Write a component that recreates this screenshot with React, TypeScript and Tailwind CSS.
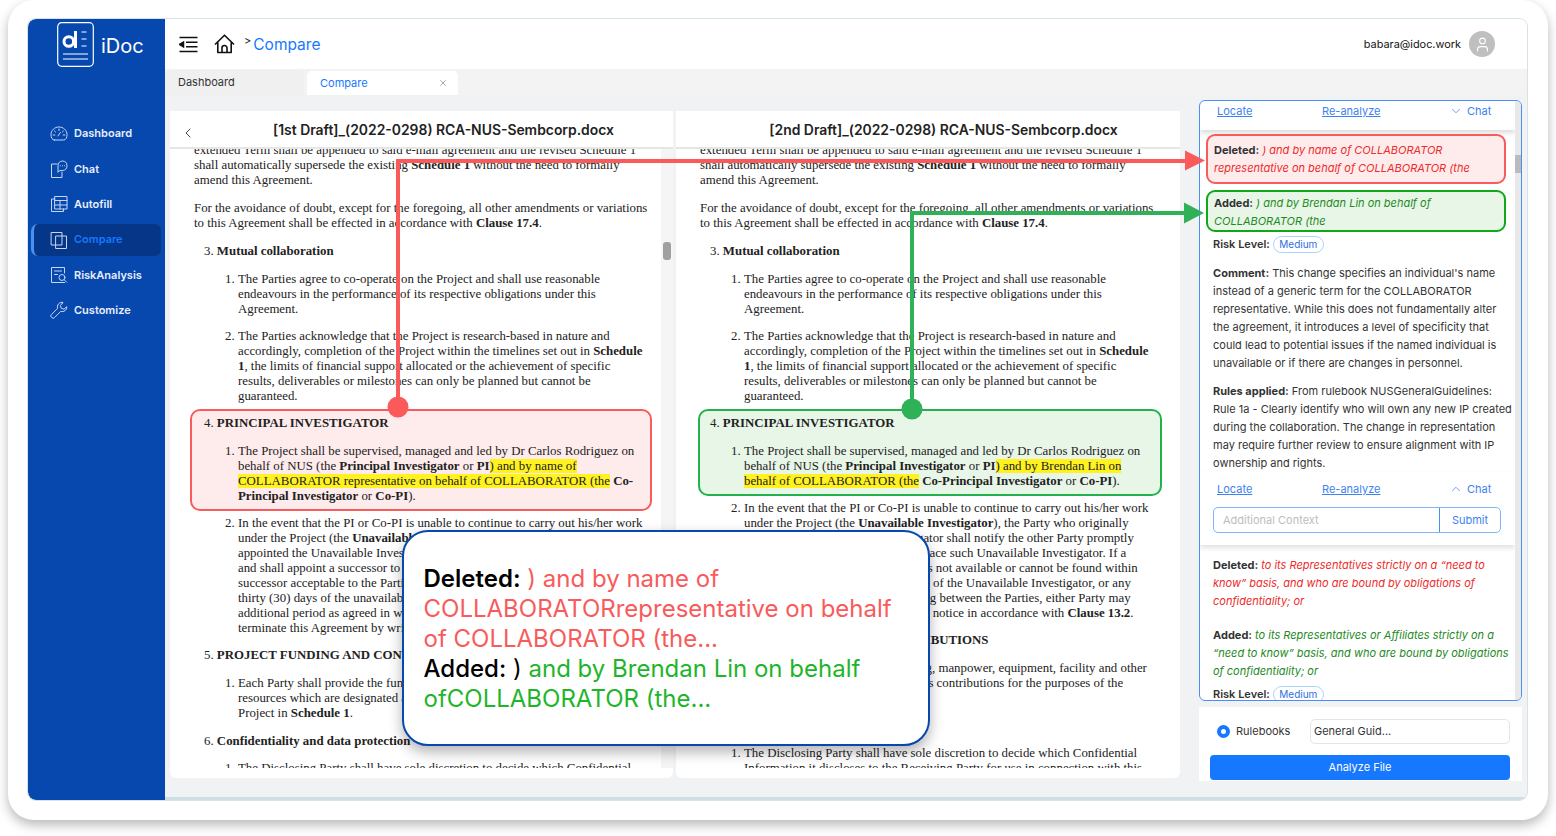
import React from "react";
import { ChevronDown, ChevronUp, ChevronLeft, X, User } from "lucide-react";

function L({ children, className = "" }: { children: React.ReactNode; className?: string }) {
    return <div className={`h-[15px] leading-[15px] whitespace-nowrap ${className}`}>{children}</div>;
}

function Item({ n, children, className = "" }: { n: string; children: React.ReactNode; className?: string }) {
    return (
        <div className={`relative pl-[44px] ${className}`}>
            <span className="absolute left-[31px] top-0 leading-[15px]">{n}</span>
            {children}
        </div>
    );
}

function Head({ n, children, className = "" }: { n: string; children: React.ReactNode; className?: string }) {
    return (
        <L className={`pl-[10px] ${className}`}>
            {n} <b>{children}</b>
        </L>
    );
}

function DocBody({ added }: { added: boolean }) {
    return (
        <div className="relative flex-1 overflow-hidden pl-[24px] font-['Liberation_Serif',serif] text-[12.85px] text-[#222]">
            <div className="-mt-[6px]">
                <L>extended Term shall be appended to said e-mail agreement and the revised Schedule 1</L>
                <L>shall automatically supersede the existing <b>Schedule 1</b> without the need to formally</L>
                <L>amend this Agreement.</L>
                <L className="mt-[13px]">For the avoidance of doubt, except for the foregoing, all other amendments or variations</L>
                <L>to this Agreement shall be effected in accordance with <b>Clause 17.4</b>.</L>
                <Head n="3." className="mt-[13px]">Mutual collaboration</Head>
                <Item n="1." className="mt-[13px]">
                    <L>The Parties agree to co-operate on the Project and shall use reasonable</L>
                    <L>endeavours in the performance of its respective obligations under this</L>
                    <L>Agreement.</L>
                </Item>
                <Item n="2." className="mt-[12px]">
                    <L>The Parties acknowledge that the Project is research-based in nature and</L>
                    <L>accordingly, completion of the Project within the timelines set out in <b>Schedule</b></L>
                    <L><b>1</b>, the limits of financial support allocated or the achievement of specific</L>
                    <L>results, deliverables or milestones can only be planned but cannot be</L>
                    <L>guaranteed.</L>
                </Item>
                {added ? (
                    <div className="relative mt-[5px] -ml-[2px] w-[464px] rounded-[10px] border-2 border-[#22b14c] bg-[#e8f6e8] pb-[5px] pt-[5px]">
                        <Head n="4.">PRINCIPAL INVESTIGATOR</Head>
                        <Item n="1." className="mt-[13px]">
                            <L>The Project shall be supervised, managed and led by Dr Carlos Rodriguez on</L>
                            <L>behalf of NUS (the <b>Principal Investigator</b> or <b>PI</b><span className="bg-[#fff21f]">) and by Brendan Lin on</span></L>
                            <L><span className="bg-[#fff21f]">behalf of COLLABORATOR (the</span> <b>Co-Principal Investigator</b> or <b>Co-PI</b>).</L>
                        </Item>
                    </div>
                ) : (
                    <div className="relative mt-[5px] -ml-[4px] w-[462px] rounded-[10px] border-2 border-[#f85b5b] bg-[#feecec] pb-[5px] pl-[2px] pt-[5px]">
                        <Head n="4.">PRINCIPAL INVESTIGATOR</Head>
                        <Item n="1." className="mt-[13px]">
                            <L>The Project shall be supervised, managed and led by Dr Carlos Rodriguez on</L>
                            <L>behalf of NUS (the <b>Principal Investigator</b> or <b>PI</b><span className="bg-[#fff21f]">) and by name of</span></L>
                            <L><span className="bg-[#fff21f]">COLLABORATOR representative on behalf of COLLABORATOR (the</span> <b>Co-</b></L>
                            <L><b>Principal Investigator</b> or <b>Co-PI</b>).</L>
                        </Item>
                    </div>
                )}
                <Item n="2." className="mt-[5px]">
                    <L>In the event that the PI or Co-PI is unable to continue to carry out his/her work</L>
                    <L>under the Project (the <b>Unavailable Investigator</b>), the Party who originally</L>
                    <L>appointed the Unavailable Investigator shall notify the other Party promptly</L>
                    <L>and shall appoint a successor to replace such Unavailable Investigator. If a</L>
                    <L>successor acceptable to the Parties is not available or cannot be found within</L>
                    <L>thirty (30) days of the unavailability of the Unavailable Investigator, or any</L>
                    <L>additional period as agreed in writing between the Parties, either Party may</L>
                    <L>terminate this Agreement by written notice in accordance with <b>Clause 13.2</b>.</L>
                </Item>
                <Head n="5." className="mt-[12px]">PROJECT FUNDING AND CONTRIBUTIONS</Head>
                <Item n="1." className="mt-[13px]">
                    <L>Each Party shall provide the funding, manpower, equipment, facility and other</L>
                    <L>resources which are designated as its contributions for the purposes of the</L>
                    <L>Project in <b>Schedule 1</b>.</L>
                </Item>
                <Head n="6." className="mt-[13px]">Confidentiality and data protection</Head>
                <Item n="1." className="mt-[12px]">
                    <L>The Disclosing Party shall have sole discretion to decide which Confidential</L>
                    <L>Information it discloses to the Receiving Party for use in connection with this</L>
                </Item>
            </div>
        </div>
    );
}

function NavIcon({ name }: { name: string }) {
    const p = {
        width: 18,
        height: 18,
        viewBox: "0 0 18 18",
        fill: "none",
        stroke: "#c6d6f3",
        strokeWidth: 1,
        strokeLinecap: "round" as const,
        strokeLinejoin: "round" as const,
    };
    if (name === "Dashboard")
        return (
            <svg {...p}>
                <path d="M4.5 15h9a3 3 0 0 0 2.6-1.5A7 7 0 0 0 17 9.5C17 5.4 13.4 2 9 2S1 5.4 1 9.5c0 1.4.3 2.9.9 4A3 3 0 0 0 4.5 15Z" />
                <path d="M9 4v1.5M4.6 6l1 1M13.4 6l-1 1M3.2 10h1.600M13.200 10h1.600M8 11l2.400-3.600" />
            </svg>
        );
    if (name === "Chat")
        return (
            <svg {...p}>
                <path d="M7 4H1.500v13.500H12V12" />
                <path d="M8 11.500V6a5 5 0 0 1 4.500-5A4.800 4.800 0 0 1 17 5.800 4.800 4.800 0 0 1 12.500 10.500H10L8 12Z" />
                <path d="M10.500 5.800h.1M12.500 5.800h.1M14.500 5.800h.1" />
            </svg>
        );
    if (name === "Autofill")
        return (
            <svg {...p}>
                <path d="M5 4H1.500v12.500h12V14" />
                <path d="M5 1.500h12V14H5ZM5 5.500h12M5 10h12M10 5.500V14" />
            </svg>
        );
    if (name === "Compare")
        return (
            <svg {...p}>
                <path d="M1.500 1.500h10.500v12.500H1.500Z" />
                <path d="M6 5h10.500v12.500H6Z" />
            </svg>
        );
    if (name === "RiskAnalysis")
        return (
            <svg {...p}>
                <path d="M14.500 7V1.500h-13v15h13" />
                <path d="M4.500 5h7M4.500 8.500h3" />
                <circle cx="12" cy="11.500" r="3" />
                <path d="m14.200 13.800 2.500 2.500" />
            </svg>
        );
    return (
        <svg {...p}>
            <path d="M12.300 1.200a4.600 4.600 0 0 0-4.700 6.100L1.400 13.500a1.900 1.900 0 0 0 0 2.700l.4.400a1.900 1.900 0 0 0 2.700 0l6.200-6.200a4.600 4.600 0 0 0 6.100-4.700l-2.800 2.500-2.800-.9-.8-2.800 2.500-2.800c-.2 0-.4.500-.6.500Z" />
        </svg>
    );
}

const NAV = ["Dashboard", "Chat", "Autofill", "Compare", "RiskAnalysis", "Customize"];

function Sidebar() {
    return (
        <aside className="flex w-[137px] shrink-0 flex-col rounded-l-[8px] bg-[#0748ae]">
            <div className="flex h-[97px] items-start pl-[29px] pt-[3px]">
                <svg width="37" height="45" viewBox="0 0 37 45" fill="none" stroke="#fff">
                    <rect x="0.7" y="0.7" width="35.600" height="43.600" rx="4" strokeWidth="1.200" />
                    <path d="M6 32h25M6 37h25" strokeWidth="1.200" />
                    <path d="M24.500 10h5M24.500 17h5M24.500 24h5" strokeWidth="1.200" />
                    <circle cx="11.800" cy="19.500" r="4.800" strokeWidth="3" />
                    <path d="M18.500 9v17" strokeWidth="3" />
                </svg>
                <span className="ml-[7px] mt-[10.500px] font-['Inter',sans-serif] text-[20px] leading-[26px] text-white">iDoc</span>
            </div>
            <nav className="flex flex-col gap-[3.400px] pl-[3px] pt-[1.500px]">
                {NAV.map((n) => (
                    <div
                        key={n}
                        className={`flex h-[32px] w-[130px] items-center gap-[6px] rounded-[7px] pl-[19px] font-['Inter',sans-serif] text-[11px] font-semibold ${
                            n === "Compare" ? "border-l-[3px] border-[#4a90f0] bg-[#063688] !pl-[16px] text-[#1677ff]" : "text-[#e8effb]"
                        }`}
                    >
                        <NavIcon name={n} />
                        <span>{n}</span>
                    </div>
                ))}
            </nav>
        </aside>
    );
}

function TopBar() {
    return (
        <header className="flex h-[50px] shrink-0 items-center bg-white pl-[14px] pr-[32px] font-['Inter',sans-serif]">
            <svg width="19" height="17" viewBox="0 0 19 17" fill="none" stroke="#111" strokeWidth="1.500">
                <path d="M0.500 1.500h18M7 6.200h11.500M7 10.800h11.500M0.500 15.500h18" />
                <path d="M0.500 8.500 4.500 6v5Z" fill="#111" />
            </svg>
            <svg className="ml-[16px]" width="21" height="20" viewBox="0 0 21 20" fill="none" stroke="#111" strokeWidth="1.600" strokeLinejoin="round">
                <path d="M1 10.500 10.500 1.200 20 10.500M3.800 8.500V18.500h13.400V8.500" />
                <path d="M8 18.500v-4.500a2.500 2.500 0 0 1 5 0v4.500" />
            </svg>
            <span className="ml-[9px] -mt-[6px] text-[11px] text-[#222]">&gt;</span>
            <span className="ml-[2px] mt-[2px] text-[15.500px] text-[#1677ff]">Compare</span>
            <span className="ml-auto text-[10.900px] text-[#111]">babara@idoc.work</span>
            <div className="ml-[8px] flex h-[26px] w-[26px] items-center justify-center rounded-full bg-[#bfbfbf]">
                <User size={17} color="#fff" strokeWidth={1.500} />
            </div>
        </header>
    );
}

function Tabs() {
    return (
        <div className="flex h-[26px] shrink-0 items-end gap-[3px] bg-[#f3f3f4] font-['Inter',sans-serif] text-[11px]">
            <div className="flex h-[25px] w-[139px] items-center rounded-t-[5px] bg-[#f0f0f0] pl-[13px] text-[#333]">Dashboard</div>
            <div className="flex h-[24px] w-[151px] items-center justify-between rounded-t-[5px] bg-white pl-[13px] pr-[10px] text-[#1677ff]">
                Compare
                <X size={10} color="#999" />
            </div>
        </div>
    );
}

function DocPanel({ title, added, back }: { title: string; added: boolean; back?: boolean }) {
    return (
        <section className={`flex h-[667px] shrink-0 flex-col rounded-[6px] bg-white ${added ? "w-[504px]" : "w-[503px]"}`}>
            <div
                className={`relative z-10 flex h-[38px] shrink-0 items-center justify-center border-b-2 border-[#e6e6e6] bg-white pt-[2px] font-['Inter',sans-serif] text-[13.900px] font-semibold text-[#222] ${
                    added ? "pl-[31px]" : "pl-[44px]"
                }`}
            >
                {back && <ChevronLeft size={16} color="#444" strokeWidth={1.500} className="absolute left-[10px] top-[14px]" />}
                {title}
            </div>
            <div className="flex min-h-0 flex-1 pb-[10px]">
                <DocBody added={added} />
                {!added && (
                    <div className="w-[12px] shrink-0 bg-[#f5f5f5] pl-[2px] pt-[93px]">
                        <div className="h-[18px] w-[8px] rounded-[3px] bg-[#a0a0a0]" />
                    </div>
                )}
            </div>
        </section>
    );
}

function Actions({ up }: { up?: boolean }) {
    return (
        <div className="flex items-center pl-[17px] text-[11px] text-[#3d82f0]">
            <span className="w-[105px] underline">Locate</span>
            <span className="w-[127px] underline">Re-analyze</span>
            {up ? <ChevronUp size={14} strokeWidth={1.300} /> : <ChevronDown size={14} strokeWidth={1.300} />}
            <span className="ml-[4px]">Chat</span>
        </div>
    );
}

function RiskPill() {
    return (
        <span className="ml-[3px] inline-flex h-[17px] items-center rounded-full border border-[#a9d2fb] px-[5.500px] text-[10px] font-normal leading-none text-[#2f6fe0]">
            Medium
        </span>
    );
}

function ReviewPanel() {
    return (
        <div className="flex h-[601px] shrink-0 overflow-hidden rounded-[6px] border border-[#4a90f0] bg-white font-['Inter',sans-serif] text-[11px] leading-[18px] text-[#333]">
            <div className="min-w-0 flex-1">
                <div className="flex h-[29px] items-start pt-[1px] shadow-[0_3px_5px_rgba(0,0,0,0.14)]">
                    <Actions />
                </div>
                <div className="px-[6px] pt-[4px]">
                    <div className="h-[50px] w-[300px] rounded-[9px] border-2 border-[#f85b5b] bg-[#feecec] px-[6px] pt-[5px] italic text-[#ee2a2a]">
                        <b className="not-italic text-[#333]">Deleted:</b> ) and by name of COLLABORATOR representative on behalf of COLLABORATOR (the
                    </div>
                    <div className="mt-[6px] h-[42px] w-[300px] rounded-[9px] border-2 border-[#10a818] bg-[#e8f6e8] px-[6px] pt-[2px] italic text-[#1d8a1d]">
                        <b className="not-italic text-[#333]">Added:</b> ) and by Brendan Lin on behalf of COLLABORATOR (the
                    </div>
                    <div className="mt-[3px] flex items-center pl-[7px] font-semibold"><span>Risk Level:</span><RiskPill /></div>
                </div>
                <div className="pl-[13px] pr-[1px]">
                    <p className="mt-[11px] h-[108px]"><b>Comment:</b> This change specifies an individual's name<br />instead of a generic term for the COLLABORATOR<br />representative. While this does not fundamentally alter<br />the agreement, it introduces a level of specificity that<br />could lead to potential issues if the named individual is<br />unavailable or if there are changes in personnel.</p>
                    <p className="mt-[10px] h-[90px]"><b>Rules applied:</b> From rulebook NUSGeneralGuidelines:<br />Rule 1a - Clearly identify who will own any new IP created<br />during the collaboration. The change in representation<br />may require further review to ensure alignment with IP<br />ownership and rights.</p>
                </div>
                <div className="pb-[12px] pt-[8px] shadow-[0_3px_5px_rgba(0,0,0,0.12)]">
                    <Actions up />
                    <div className="ml-[13px] mt-[9px] flex h-[26px] w-[288px] rounded-[5px] border border-[#7fb4f5]">
                        <span className="flex flex-1 items-center pl-[9px] text-[#bdbdbd]">Additional Context</span>
                        <span className="flex w-[61px] items-center justify-center border-l border-[#4a90f0] text-[#3d82f0]">Submit</span>
                    </div>
                </div>
                <div className="pl-[13px] pr-[4px] pt-[11px]">
                    <p className="italic text-[#ee2a2a]"><b className="not-italic text-[#333]">Deleted:</b> to its Representatives strictly on a “need to know” basis, and who are bound by obligations of confidentiality; or</p>
                    <p className="mt-[16px] italic text-[#1d8a1d]"><b className="not-italic text-[#333]">Added:</b> to its Representatives or Affiliates strictly on a “need to know” basis, and who are bound by obligations of confidentiality; or</p>
                    <div className="mt-[5px] flex items-center font-semibold"><span>Risk Level:</span><RiskPill /></div>
                </div>
            </div>
            <div className="w-[6px] shrink-0 bg-[#e9e9e9] pt-[54px]">
                <div className="h-[18px] w-[6px] bg-[#bbb]" />
            </div>
        </div>
    );
}

function RulebookBar() {
    return (
        <div className="mt-[6px] h-[74px] bg-white pl-[11px] font-['Inter',sans-serif] text-[11px]">
            <div className="flex h-[48px] items-center pt-[1px]">
                <span className="ml-[7px] h-[13px] w-[13px] rounded-full border-[4px] border-[#1677ff] bg-white" />
                <span className="ml-[6px] w-[74px] text-[#333]">Rulebooks</span>
                <span className="flex h-[25px] w-[200px] items-center rounded-[5px] border border-[#e5e5e5] pl-[3px] text-[#333]">General Guid...</span>
            </div>
            <div className="flex h-[25px] w-[300px] items-center justify-center rounded-[4px] bg-[#1677ff] text-white">Analyze File</div>
        </div>
    );
}

function Callout() {
    return (
        <div className="absolute left-[402px] top-[530px] z-30 h-[216px] w-[528px] rounded-[26px] border-2 border-[#0748ae] bg-white pl-[19.500px] pt-[32px] font-['Inter',sans-serif] text-[24px] leading-[30px] text-[#f85b5b] shadow-[0_6px_14px_rgba(0,0,0,0.3)]">
            <span className="font-semibold text-black">Deleted:</span> ) and by name of<br />
            COLLABORATORrepresentative on behalf<br />
            of COLLABORATOR (the...<br />
            <span className="text-black"><span className="font-medium">Added:</span> )</span> <span className="text-[#1fb52b]">and by Brendan Lin on behalf</span><br />
            <span className="text-[#1fb52b]">ofCOLLABORATOR (the...</span>
        </div>
    );
}

function Connectors() {
    return (
        <svg className="pointer-events-none absolute left-0 top-0 z-20" width="1556" height="836" fill="none">
            <path d="M398 407V161H1186" stroke="#fb5a5a" strokeWidth="4" />
            <path d="M1205 160.500 1185 150.500v20Z" fill="#fb5a5a" />
            <circle cx="398" cy="407" r="10.500" fill="#fb5a5a" />
            <path d="M912 409V213H1186" stroke="#2fb158" strokeWidth="4" />
            <path d="M1204 213 1184 202.500v21Z" fill="#2fb158" />
            <circle cx="912" cy="409" r="10.500" fill="#2fb158" />
        </svg>
    );
}

export default function App() {
    return (
        <div className="relative h-[836px] w-[1556px] overflow-hidden bg-white">
            <div className="ml-[8px] h-[820px] w-[1540px] rounded-[26px] bg-white pl-[20px] pr-[21px] pt-[19px] shadow-[0_5px_12px_rgba(0,0,0,0.28)]">
                <div className="flex h-[781px] w-[1499px] overflow-hidden rounded-[8px] bg-[#f1f2f4] shadow-[0_0_0_1px_#d5e3e8]">
                    <Sidebar />
                    <main className="flex min-w-0 flex-1 flex-col border-b-[3px] border-[#cfe0e4]">
                        <TopBar />
                        <Tabs />
                        <div className="flex gap-[3px] pl-[5px] pt-[16px]">
                            <DocPanel title="[1st Draft]_(2022-0298) RCA-NUS-Sembcorp.docx" added={false} back />
                            <DocPanel title="[2nd Draft]_(2022-0298) RCA-NUS-Sembcorp.docx" added />
                            <div className="-mt-[11px] ml-[16px] w-[323px] shrink-0">
                                <ReviewPanel />
                                <RulebookBar />
                            </div>
                        </div>
                    </main>
                </div>
            </div>
            <Connectors />
            <Callout />
        </div>
    );
}
